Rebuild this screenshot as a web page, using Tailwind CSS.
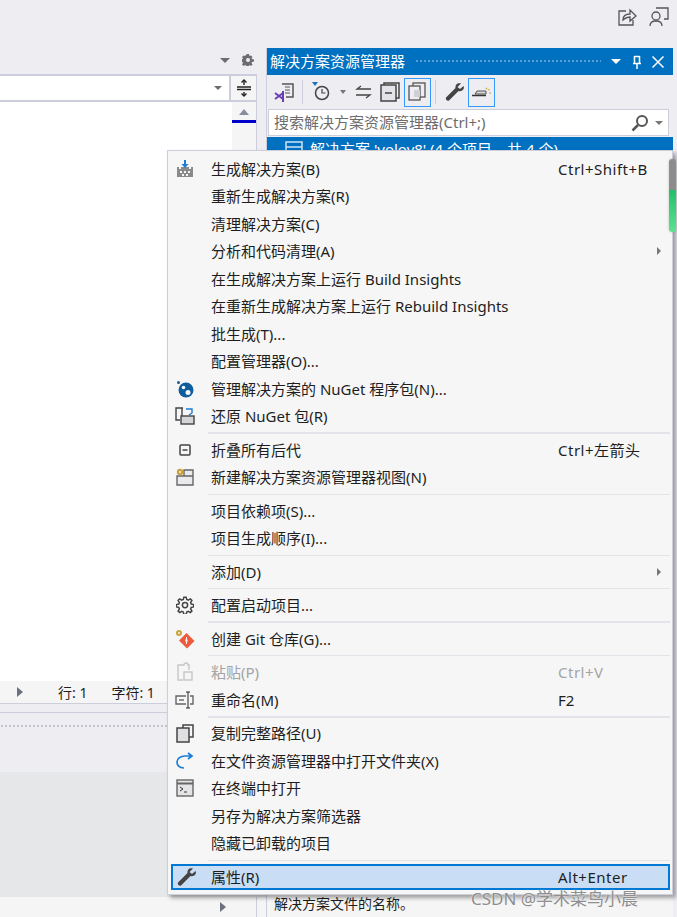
<!doctype html>
<html lang="zh-CN">
  <head>
    <meta charset="UTF-8" />
    <script src="https://cdn.jsdelivr.net/npm/@tailwindcss/browser@4"></script>
    <title>解决方案资源管理器</title>
  </head>
  <body class="relative h-[917px] w-[677px] overflow-hidden bg-[#eeeef2] font-['Noto_Sans','Noto_Sans_CJK_SC',sans-serif] text-[15px] text-[#1e1e1e]">
    <!-- top toolbar -->
    <div class="flex h-[48px] items-start justify-end gap-[12px] pt-[7px] pr-[8px]">
      <svg class="h-[20px] w-[20px]" viewBox="0 0 20 20" fill="none" stroke="#555" stroke-width="1.300"><path d="M9 4H2v14h14v-5" /><path d="M6 13c0-4 3-6 7-6V3l6 6-6 5v-4c-3 0-5 1-7 3z" /></svg>
      <svg class="h-[20px] w-[20px]" viewBox="0 0 20 20" fill="none" stroke="#555" stroke-width="1.300"><path d="M7 1h12v11h-4" /><circle cx="7" cy="9" r="4" /><path d="M1 19c0-4 3-5 6-5s6 1 6 5" /></svg>
    </div>

    <div class="flex h-[869px]">
      <!-- editor side -->
      <div class="flex w-[266px] shrink-0 flex-col">
        <div class="flex h-[26px] items-center justify-end gap-[12px] pr-[12px] pb-[2px]">
          <div class="h-0 w-0 border-x-[5px] border-t-[5px] border-x-transparent border-t-[#6d6d70]"></div>
          <svg class="h-[12px] w-[12px]" viewBox="0 0 24 24" fill="#6d6d70"><path fill-rule="evenodd" d="M10 0h4l1 4 3-1 3 3-2 3 1 1 4 1v4l-4 1-1 2 2 3-3 3-3-2-1 1-1 4h-4l-1-4-2-1-3 2-3-3 2-3-1-2-4-1v-4l4-1 1-1-2-3 3-3 3 1zM12 8a4 4 0 100 8 4 4 0 000-8z" /></svg>
        </div>
        <div class="flex h-[28px] w-[257px] border-y-[2px] border-r-[1px] border-[#cccedb] bg-[#f5f5f5]">
          <div class="flex w-[231px] items-center justify-end border-r-[2px] border-[#cccedb] bg-white pr-[7px]">
            <div class="h-0 w-0 border-x-[4px] border-t-[4px] border-x-transparent border-t-[#6d6d70]"></div>
          </div>
          <div class="flex flex-1 items-center justify-center">
            <svg class="h-[18px] w-[16px]" viewBox="0 0 16 18" fill="none" stroke="#222" stroke-width="1.400"><path d="M1 8h14M1 10.500h14M8 6V1M8 13v4" /><path d="M5.500 3.500L8 1l2.500 2.500M5.500 14.500L8 17l2.500-2.500" /></svg>
          </div>
        </div>
        <div class="flex h-[579px] w-[257px] border-r-[1px] border-[#cccedb]">
          <div class="w-[232px] bg-white"></div>
          <div class="flex flex-1 flex-col bg-[#f5f5f5]">
            <div class="flex h-[18px] items-center justify-center pt-[2px]">
              <div class="h-0 w-0 border-x-[5px] border-b-[6px] border-x-transparent border-b-[#8a8d9e]"></div>
            </div>
            <div class="h-[3px] bg-[#0000cd]"></div>
          </div>
        </div>
        <div class="flex h-[22px] items-center bg-[#f5f5f5] text-[14px]">
          <div class="ml-[17px] h-0 w-0 border-y-[5px] border-l-[6px] border-y-transparent border-l-[#6d7080]"></div>
          <span class="ml-[35px]">行: 1</span>
          <span class="ml-[24px]">字符: 1</span>
        </div>
        <div class="h-[10px] border-y-[1px] border-[#cccedb]"></div>
        <div class="h-[59px] pt-[11px]">
          <div class="h-[5px] bg-[radial-gradient(#c4c5cf_1px,transparent_1px)] bg-[length:4px_4px]"></div>
        </div>
        <div class="h-[125px] bg-[#e6e7e8]"></div>
        <div class="flex-1 bg-[#f5f5f5]">
          <div class="flex h-full w-[257px] items-center justify-end border-r-[1px] border-[#cccedb] pr-[30px]">
            <div class="h-0 w-0 border-y-[5px] border-l-[6px] border-y-transparent border-l-[#6d7080]"></div>
          </div>
        </div>
      </div>

      <!-- solution explorer -->
      <div class="flex w-[407px] flex-col border-l-[1px] border-[#cccedb]">
        <div class="flex h-[27px] items-center bg-[#0070c0] pl-[3px] text-white">
          <span class="shrink-0">解决方案资源管理器</span>
          <div class="mx-[10px] h-[5px] flex-1 bg-[radial-gradient(#5a9fd4_1px,transparent_1px)] bg-[length:4px_4px]"></div>
          <div class="mr-[12px] h-0 w-0 border-x-[5px] border-t-[5px] border-x-transparent border-t-white"></div>
          <svg class="mr-[11px] h-[14px] w-[8px]" viewBox="0 0 8 14" fill="none" stroke="white" stroke-width="1.500"><path d="M1.500 1v7M6.500 1v7M0 8.500h8M4 9v5M1.500 1.500h5" /></svg>
          <svg class="mr-[9px] h-[12px] w-[12px]" viewBox="0 0 12 12" fill="none" stroke="white" stroke-width="1.500"><path d="M.5.500l11 11M11.500.500l-11 11" /></svg>
        </div>
        <!-- explorer toolbar -->
        <div class="flex h-[34px] items-center pl-[7px]">
          <svg class="h-[20px] w-[20px]" viewBox="0 0 20 20" fill="none"><path d="M8 2h11v13h-7" stroke="#555" stroke-width="1.500" /><path d="M11 5h5M11 8h5M11 11h5" stroke="#555" /><path d="M1 11l8 6M1 17l8-6M9 9v11" stroke="#6a3fb5" stroke-width="2" /></svg>
          <div class="mx-[8px] h-[24px] w-[1px] bg-[#cccedb]"></div>
          <svg class="h-[22px] w-[20px]" viewBox="0 0 20 22" fill="none"><path d="M1 1h6L4 5z" fill="#1c6fb8" /><circle cx="11" cy="12" r="6.500" stroke="#444" stroke-width="1.500" /><path d="M11 8v4h3.500" stroke="#444" stroke-width="1.200" /></svg>
          <div class="ml-[9px] h-0 w-0 border-x-[3.500px] border-t-[4px] border-x-transparent border-t-[#777]"></div>
          <svg class="ml-[9px] h-[14px] w-[17px]" viewBox="0 0 17 14" fill="none" stroke="#444" stroke-width="1.300"><path d="M16 4H2l4-3M1 10h14l-4 3" /></svg>
          <svg class="ml-[8px] h-[20px] w-[20px]" viewBox="0 0 20 20" fill="none" stroke="#444" stroke-width="1.500"><rect x="1" y="3" width="15" height="16" fill="#e4e4e8" /><path d="M4 3V1h15v15h-3M5 11h7" /></svg>
          <div class="ml-[4px] flex h-[29px] w-[27px] items-center justify-center border-[1px] border-[#3399ff]">
            <svg class="h-[20px] w-[19px]" viewBox="0 0 19 20" fill="none" stroke="#555" stroke-width="1.300"><rect x="5" y="1" width="12" height="14" /><rect x="1" y="4" width="11" height="14" fill="#eeeef2" /><rect x="6" y="8" width="6" height="7" fill="#cfcfd6" stroke="none" /></svg>
          </div>
          <div class="mx-[4px] h-[24px] w-[1px] bg-[#cccedb]"></div>
          <svg class="mr-[3px] ml-[5px] h-[20px] w-[20px]" viewBox="0 0 20 20"><path d="M18.500 4l-3.500 3-2.500-2L16 1.500c-3-1.200-6 1-5.500 4.500L1 15.500c-1 2 1.500 4 3 3L13.500 9c3.500 1 6.500-2 5-5z" fill="#444" /></svg>
          <div class="flex h-[29px] w-[27px] items-center justify-center border-[1px] border-[#3399ff]">
            <svg class="h-[10px] w-[20px]" viewBox="0 0 20 10" fill="none"><path d="M3 7l2-3h9v3z" fill="#d8d8dc" stroke="#555" /><path d="M0 8.500h14" stroke="#333" stroke-width="1.500" /><path d="M14 1l1 1M17 6h2M16 3l1.500-.5" stroke="#c69d2b" stroke-width="1.200" /></svg>
          </div>
        </div>
        <!-- search -->
        <div class="ml-[1px] flex h-[27px] w-[401px] items-center border-[1px] border-[#cccedb] bg-white pl-[5px] text-[#6d6d6d]">
          <span class="flex-1">搜索解决方案资源管理器(Ctrl+;)</span>
          <svg class="mr-[6px] h-[18px] w-[18px]" viewBox="0 0 18 18" fill="none" stroke="#555" stroke-width="2"><circle cx="11" cy="7" r="5" /><path d="M7 11l-5.500 5.500" stroke-width="2.500" /></svg>
          <div class="mr-[5px] h-0 w-0 border-x-[4px] border-t-[4px] border-x-transparent border-t-[#777]"></div>
        </div>
        <div class="mt-[1px] flex h-[24px] items-center bg-[#0070c0] pl-[18px] text-white">
          <svg class="h-[16px] w-[18px]" viewBox="0 0 18 16" fill="none" stroke="#cfe3f5" stroke-width="1.500"><rect x="1" y="1" width="16" height="14" /><path d="M1 6h16M4 10h8" /></svg>
          <span class="ml-[7px]">解决方案 'yolov8' (4 个项目，共 4 个)</span>
        </div>
        <div class="flex-1 bg-white"></div>
        <div class="flex h-[28px] items-center bg-[#f5f5f5] pl-[7px] text-[14px]">解决方案文件的名称。</div>
      </div>
    </div>

    <!-- context menu -->
    <div class="absolute top-[150px] left-[167px] h-[745px] w-[506px] border-[1px] border-[#cccedb] bg-[#f6f6f6] pt-[4px] pr-[2px] pl-[3px] shadow-[3px_3px_4px_rgba(0,0,0,0.35)]">
      <div class="flex h-[27.500px] items-center">
        <div class="flex w-[40px] justify-center pr-[12px]">
          <svg class="h-[20px] w-[20px] shrink-0" viewBox="0 0 20 20"><path d="M2 8h2v2h2V8h8v2h2V8h2v10H2z" fill="#8a8a8a" /><path d="M5 12h2v2H5zM9 12h2v2H9zM13 12h2v2h-2zM7 15h2v2H7zM11 15h2v2h-2z" fill="#f6f6f6" /><path d="M9 1h2v4h2.500L10 9 6.500 5H9z" fill="#1c7cd6" /></svg>
        </div>
        <span class="w-[347px]">生成解决方案(B)</span><span class="tracking-[0.5px]">Ctrl+Shift+B</span>
      </div>
      <div class="flex h-[27.500px] items-center pl-[40px]">重新生成解决方案(R)</div>
      <div class="flex h-[27.500px] items-center pl-[40px]">清理解决方案(C)</div>
      <div class="flex h-[27.500px] items-center justify-between pr-[9px] pl-[40px]">
        <span>分析和代码清理(A)</span>
        <div class="h-0 w-0 border-y-[4px] border-l-[4px] border-y-transparent border-l-[#777]"></div>
      </div>
      <div class="flex h-[27.500px] items-center pl-[40px]">在生成解决方案上运行 Build Insights</div>
      <div class="flex h-[27.500px] items-center pl-[40px]">在重新生成解决方案上运行 Rebuild Insights</div>
      <div class="flex h-[27.500px] items-center pl-[40px]">批生成(T)...</div>
      <div class="flex h-[27.500px] items-center pl-[40px]">配置管理器(O)...</div>
      <div class="flex h-[27.500px] items-center">
        <div class="flex w-[40px] justify-center pr-[12px]">
          <svg class="h-[20px] w-[20px] shrink-0" viewBox="0 0 20 20"><circle cx="3.500" cy="3.500" r="1.500" fill="#1a5a96" /><circle cx="11" cy="11" r="7.500" fill="#0f5d9c" /><circle cx="8.500" cy="8.500" r="1.800" fill="#f6f6f6" /><circle cx="13" cy="13.500" r="2.500" fill="#f6f6f6" /></svg>
        </div>
        <span>管理解决方案的 NuGet 程序包(N)...</span>
      </div>
      <div class="flex h-[27.500px] items-center">
        <div class="flex w-[40px] justify-center pr-[12px]">
          <svg class="h-[20px] w-[20px] shrink-0" viewBox="0 0 20 20" fill="none" stroke="#444" stroke-width="1.400"><path d="M8 2H1v12h4" /><path d="M7 2v12" /><rect x="6" y="10" width="13" height="8" fill="#d5d5d8" /><path d="M11 3h6v4l-3 2" stroke="#1c7cd6" /></svg>
        </div>
        <span>还原 NuGet 包(R)</span>
      </div>
      <div class="flex h-[6px] items-center pl-[37px]"><div class="h-[2px] w-full bg-[#e3e4ea]"></div></div>
      <div class="flex h-[27.500px] items-center">
        <div class="flex w-[40px] justify-center pr-[12px]">
          <svg class="h-[12px] w-[12px] shrink-0" viewBox="0 0 12 12" fill="none" stroke="#444" stroke-width="1.500"><rect x="1" y="1" width="10" height="10" rx="1" /><path d="M3.500 6h5" /></svg>
        </div>
        <span class="w-[347px]">折叠所有后代</span><span class="tracking-[0.5px]">Ctrl+左箭头</span>
      </div>
      <div class="flex h-[27.500px] items-center">
        <div class="flex w-[40px] justify-center pr-[12px]">
          <svg class="h-[20px] w-[20px] shrink-0" viewBox="0 0 20 20"><path d="M2 9h16v9H2zM9 3h9v6H9z" fill="#eaeaec" stroke="#666" stroke-width="1.400" /><circle cx="5" cy="5" r="3.200" fill="#c9a33c" /><circle cx="5" cy="5" r="1" fill="#f6f6f6" /></svg>
        </div>
        <span>新建解决方案资源管理器视图(N)</span>
      </div>
      <div class="flex h-[6px] items-center pl-[37px]"><div class="h-[1px] w-full bg-[#e3e4ea]"></div></div>
      <div class="flex h-[27.500px] items-center pl-[40px]">项目依赖项(S)...</div>
      <div class="flex h-[27.500px] items-center pl-[40px]">项目生成顺序(I)...</div>
      <div class="flex h-[6px] items-center pl-[37px]"><div class="h-[1px] w-full bg-[#e3e4ea]"></div></div>
      <div class="flex h-[27.500px] items-center justify-between pr-[9px] pl-[40px]">
        <span>添加(D)</span>
        <div class="h-0 w-0 border-y-[4px] border-l-[4px] border-y-transparent border-l-[#777]"></div>
      </div>
      <div class="flex h-[6px] items-center pl-[37px]"><div class="h-[1px] w-full bg-[#e3e4ea]"></div></div>
      <div class="flex h-[27.500px] items-center">
        <div class="flex w-[40px] justify-center pr-[12px]">
          <svg class="h-[18px] w-[18px] shrink-0" viewBox="0 0 24 24" fill="none" stroke="#444" stroke-width="2"><circle cx="12" cy="12" r="3.500" /><path d="M10.500 1.500h3l.8 3.200 2 .8 2.800-1.700 2.100 2.100-1.700 2.800.8 2 3.200.8v3l-3.200.8-.8 2 1.700 2.800-2.100 2.100-2.800-1.700-2 .8-.8 3.200h-3l-.8-3.200-2-.8-2.800 1.700-2.100-2.100 1.700-2.800-.8-2-3.200-.8v-3l3.200-.8.8-2-1.700-2.800 2.100-2.100 2.800 1.700 2-.8z" /></svg>
        </div>
        <span>配置启动项目...</span>
      </div>
      <div class="flex h-[6px] items-center pl-[37px]"><div class="h-[2px] w-full bg-[#e3e4ea]"></div></div>
      <div class="flex h-[27.500px] items-center">
        <div class="flex w-[40px] justify-center pr-[12px]">
          <svg class="h-[20px] w-[20px] shrink-0" viewBox="0 0 20 20"><path d="M11.500 4l8 8-7.500 7.500-8-8z" fill="#ef5a3c" /><circle cx="11.500" cy="11.500" r="1.300" fill="#f6f6f6" /><path d="M11.500 8v7" stroke="#f6f6f6" /><circle cx="4" cy="4" r="3" fill="#c9a33c" /><circle cx="4" cy="4" r="1" fill="#f6f6f6" /></svg>
        </div>
        <span>创建 Git 仓库(G)...</span>
      </div>
      <div class="flex h-[6px] items-center pl-[37px]"><div class="h-[1px] w-full bg-[#e3e4ea]"></div></div>
      <div class="flex h-[27.500px] items-center text-[#a2a4a5]">
        <div class="flex w-[40px] justify-center pr-[12px]">
          <svg class="h-[20px] w-[20px] shrink-0" viewBox="0 0 20 20" fill="none" stroke="#c6c6c6" stroke-width="1.400"><path d="M7 3H3v15h5" /><path d="M7 3h2a2 2 0 014 0h1v5" /><rect x="9" y="10" width="8" height="8" /></svg>
        </div>
        <span class="w-[347px]">粘贴(P)</span><span class="tracking-[0.5px]">Ctrl+V</span>
      </div>
      <div class="flex h-[27.500px] items-center">
        <div class="flex w-[40px] justify-center pr-[12px]">
          <svg class="h-[18px] w-[20px] shrink-0" viewBox="0 0 20 18" fill="none" stroke="#666" stroke-width="1.400"><path d="M11 5H1v8h10M15 5h3v8h-3" /><path d="M4 9h5" /><path d="M11 1h2v16h-2M13 1h2M13 17h2" stroke="#222" stroke-width="1" /></svg>
        </div>
        <span class="w-[347px]">重命名(M)</span><span>F2</span>
      </div>
      <div class="flex h-[6px] items-center pl-[37px]"><div class="h-[2px] w-full bg-[#e3e4ea]"></div></div>
      <div class="flex h-[27.500px] items-center">
        <div class="flex w-[40px] justify-center pr-[12px]">
          <svg class="h-[20px] w-[20px] shrink-0" viewBox="0 0 20 20" fill="none" stroke="#444" stroke-width="1.500"><path d="M8 5V2h10v12h-4" /><rect x="2" y="5" width="12" height="14" fill="#e0e0e3" /></svg>
        </div>
        <span>复制完整路径(U)</span>
      </div>
      <div class="flex h-[27.500px] items-center">
        <div class="flex w-[40px] justify-center pr-[12px]">
          <svg class="h-[18px] w-[18px] shrink-0" viewBox="0 0 18 18" fill="none" stroke="#1c7cd6" stroke-width="1.700"><path d="M8 16C3 16 1 13 1 10s3-6 8-6h7M12 1l4 3-4 3" /></svg>
        </div>
        <span>在文件资源管理器中打开文件夹(X)</span>
      </div>
      <div class="flex h-[27.500px] items-center">
        <div class="flex w-[40px] justify-center pr-[12px]">
          <svg class="h-[18px] w-[18px] shrink-0" viewBox="0 0 18 18" fill="none" stroke="#666" stroke-width="1.400"><rect x="1" y="1" width="16" height="16" fill="#e4e4e6" /><path d="M1 4.500h16" stroke-width="2" /><path d="M4 8l3 2-3 2M8 13h3" stroke="#333" stroke-width="1" /></svg>
        </div>
        <span>在终端中打开</span>
      </div>
      <div class="flex h-[27.500px] items-center pl-[40px]">另存为解决方案筛选器</div>
      <div class="flex h-[27.500px] items-center pl-[40px]">隐藏已卸载的项目</div>
      <div class="flex h-[7px] items-center pl-[37px]"><div class="h-[1px] w-full bg-[#e3e4ea]"></div></div>
      <div class="flex h-[26px] items-center border-[2px] border-[#0078d4] bg-[#c9def5]">
        <div class="flex w-[38px] justify-center pr-[10px]">
          <svg class="h-[20px] w-[20px] shrink-0" viewBox="0 0 20 20"><path d="M18.500 4l-3.500 3-2.500-2L16 1.500c-3-1.200-6 1-5.500 4.500L1 15.500c-1 2 1.500 4 3 3L13.500 9c3.500 1 6.500-2 5-5z" fill="#444" /></svg>
        </div>
        <span class="w-[347px]">属性(R)</span><span class="tracking-[0.5px]">Alt+Enter</span>
      </div>
    </div>

    <!-- overview scrollbar over menu edge -->
    <div class="absolute top-[159px] left-[669px] h-[73px] w-[7px] overflow-hidden rounded-[3px] shadow-[0_0_3px_rgba(0,0,0,0.2)]">
      <div class="h-[31px] bg-[#8c8c8c]"></div>
      <div class="h-[42px] bg-linear-to-b from-[#20bf6b] to-[#5be28e]"></div>
    </div>

    <div class="absolute top-[890px] left-[471px] text-[17px] leading-[17px] text-[#8e8e8e] [text-shadow:0_0_2px_#fff]">CSDN @学术菜鸟小晨</div>
  </body>
</html>
